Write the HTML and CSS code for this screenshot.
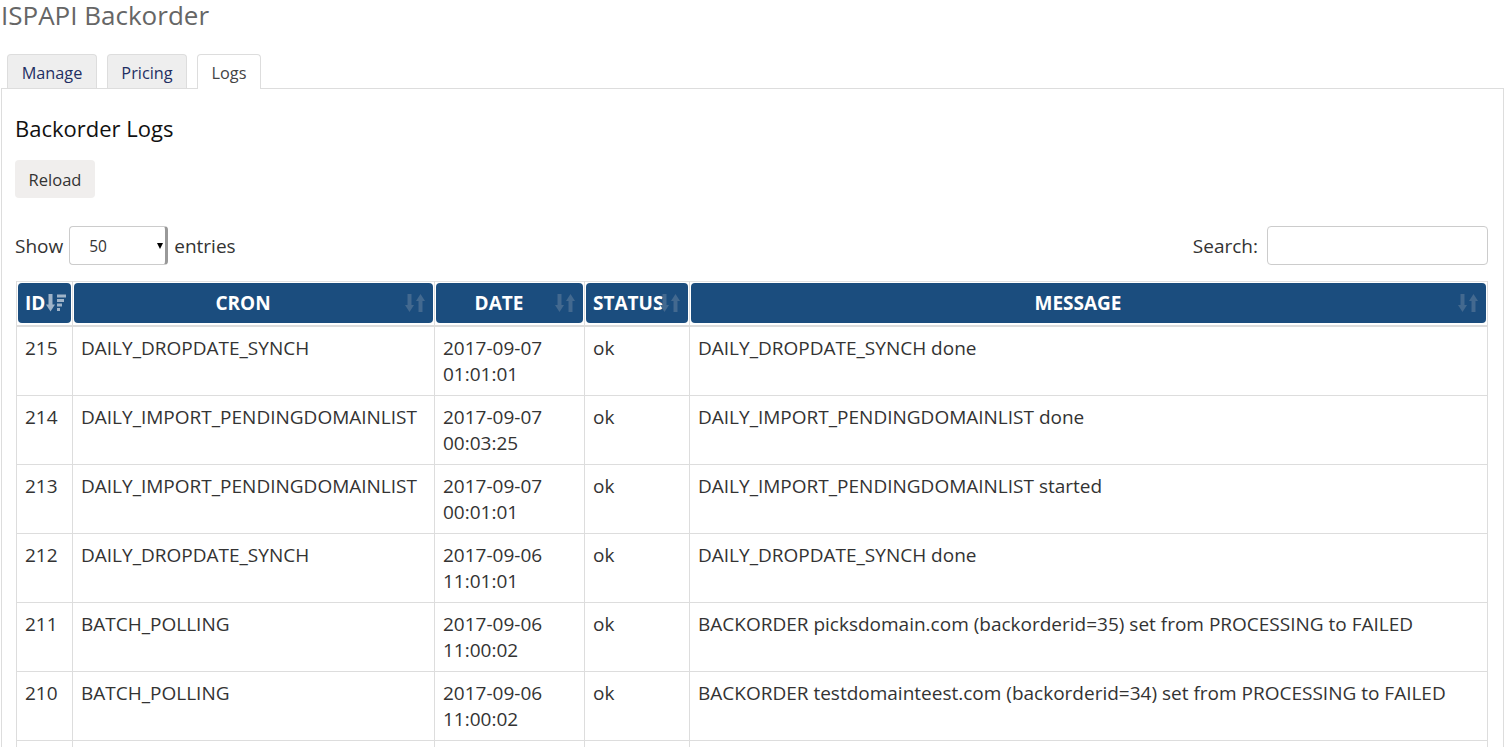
FILE: index.html
```html
<!DOCTYPE html>
<html>
<head>
<meta charset="utf-8">
<link rel="stylesheet" href="styles.css">
</head>
<body>
<div class="page">
  <h1 class="title">ISPAPI Backorder</h1>
  <ul class="tabs">
    <li class="tab tab-manage">Manage</li>
    <li class="tab tab-pricing">Pricing</li>
    <li class="tab tab-logs active">Logs</li>
  </ul>
  <div class="panel">
    <h2 class="heading">Backorder Logs</h2>
    <button class="btn">Reload</button>
    <div class="controls">
      <label class="length">Show
        <span class="select-wrap">
          <select class="select"><option>50</option></select>
          <span class="caret"></span>
        </span>
        entries</label>
      <label class="search">Search: <input class="search-input" type="text"></label>
    </div>
    <table class="grid">
      <colgroup>
        <col style="width:56px"><col style="width:362px"><col style="width:150px"><col style="width:105px"><col>
      </colgroup>
      <thead>
        <tr>
          <th><div class="th th-left">ID<svg class="sort sort-id" viewBox="0 0 20 18" width="20" height="18"><rect x="2.5" y="0" width="4" height="11"/><polygon points="0,10.5 9,10.5 4.5,17.5"/><rect x="11" y="0.5" width="9" height="3"/><rect x="11" y="5" width="7" height="3"/><rect x="11" y="9.5" width="5" height="3"/><rect x="11" y="14" width="3" height="3"/></svg></div></th>
          <th><div class="th">CRON<svg class="sort" viewBox="0 0 20 20" width="20" height="20"><rect x="2.5" y="1" width="4" height="12"/><polygon points="0,12 9,12 4.5,19"/><polygon points="11,8 20,8 15.5,1"/><rect x="13.5" y="7" width="4" height="12"/></svg></div></th>
          <th><div class="th">DATE<svg class="sort" viewBox="0 0 20 20" width="20" height="20"><rect x="2.5" y="1" width="4" height="12"/><polygon points="0,12 9,12 4.5,19"/><polygon points="11,8 20,8 15.5,1"/><rect x="13.5" y="7" width="4" height="12"/></svg></div></th>
          <th><div class="th th-left">STATUS<svg class="sort" viewBox="0 0 20 20" width="20" height="20"><rect x="2.5" y="1" width="4" height="12"/><polygon points="0,12 9,12 4.5,19"/><polygon points="11,8 20,8 15.5,1"/><rect x="13.5" y="7" width="4" height="12"/></svg></div></th>
          <th><div class="th">MESSAGE<svg class="sort" viewBox="0 0 20 20" width="20" height="20"><rect x="2.5" y="1" width="4" height="12"/><polygon points="0,12 9,12 4.5,19"/><polygon points="11,8 20,8 15.5,1"/><rect x="13.5" y="7" width="4" height="12"/></svg></div></th>
        </tr>
      </thead>
      <tbody>
        <tr><td>215</td><td>DAILY_DROPDATE_SYNCH</td><td>2017-09-07<br>01:01:01</td><td>ok</td><td>DAILY_DROPDATE_SYNCH done</td></tr>
        <tr><td>214</td><td>DAILY_IMPORT_PENDINGDOMAINLIST</td><td>2017-09-07<br>00:03:25</td><td>ok</td><td>DAILY_IMPORT_PENDINGDOMAINLIST done</td></tr>
        <tr><td>213</td><td>DAILY_IMPORT_PENDINGDOMAINLIST</td><td>2017-09-07<br>00:01:01</td><td>ok</td><td>DAILY_IMPORT_PENDINGDOMAINLIST started</td></tr>
        <tr><td>212</td><td>DAILY_DROPDATE_SYNCH</td><td>2017-09-06<br>11:01:01</td><td>ok</td><td>DAILY_DROPDATE_SYNCH done</td></tr>
        <tr><td>211</td><td>BATCH_POLLING</td><td>2017-09-06<br>11:00:02</td><td>ok</td><td>BACKORDER picksdomain.com (backorderid=35) set from PROCESSING to FAILED</td></tr>
        <tr><td>210</td><td>BATCH_POLLING</td><td>2017-09-06<br>11:00:02</td><td>ok</td><td>BACKORDER testdomainteest.com (backorderid=34) set from PROCESSING to FAILED</td></tr>
        <tr><td>209</td><td>BATCH_POLLING</td><td>2017-09-06<br>11:00:02</td><td>ok</td><td>BACKORDER testdomain.com (backorderid=33) set from PROCESSING to FAILED</td></tr>
        <tr><td>208</td><td>DAILY_DROPDATE_SYNCH</td><td>2017-09-06<br>01:01:01</td><td>ok</td><td>DAILY_DROPDATE_SYNCH done</td></tr>
      </tbody>
    </table>
  </div>
</div>
</body>
</html>
```

FILE: styles.css
```css
* { box-sizing: border-box; }
html, body { margin: 0; padding: 0; background: #fff; }
body {
  font-family: "Open Sans", "DejaVu Sans", sans-serif;
  color: #333;
  font-size: 19px;
}
.page {
  width: 1504px;
  padding-left: 1px;
}
.title {
  margin: 0;
  font-size: 26px;
  font-weight: normal;
  color: #666;
  line-height: 30px;
  height: 54px;
}
.tabs {
  list-style: none;
  margin: 0;
  padding: 0 0 0 6px;
  display: flex;
  gap: 10px;
  height: 34px;
  position: relative;
  z-index: 1;
}
.tab {
  height: 34px;
  line-height: 36px;
  font-size: 16.3px;
  text-align: center;
  color: #1f2f63;
  background: #eee;
  border: 1px solid #ddd;
  border-bottom: none;
  border-radius: 4px 4px 0 0;
}
.tab-manage { width: 90px; }
.tab-pricing { width: 80px; }
.tab-logs { width: 64px; }
.tab.active {
  background: #fff;
  color: #444;
  height: 35px;
}
.panel {
  border: 1px solid #ddd;
  border-bottom: none;
  padding: 14px 15px 0 13px;
  width: 1503px;
  min-height: 700px;
}
.heading {
  margin: 10px 0 0 0;
  font-size: 22px;
  font-weight: normal;
  color: #111;
  line-height: 30px;
}
.btn {
  margin-top: 17px;
  display: block;
  width: 80px;
  height: 38px;
  border: none;
  border-radius: 4px;
  background: #f0eeed;
  color: #333;
  font-family: "Open Sans", sans-serif;
  font-size: 16.5px;
  padding: 0;
}
.controls {
  margin-top: 28px;
  display: flex;
  justify-content: space-between;
  align-items: center;
  height: 39px;
}
.length, .search {
  display: flex;
  align-items: center;
  gap: 6px;
  font-size: 19px;
  color: #333;
}
.select-wrap {
  position: relative;
  display: inline-block;
  width: 99px;
  height: 39px;
}
.select {
  appearance: none;
  -webkit-appearance: none;
  width: 99px;
  height: 39px;
  border: 1px solid #ccc;
  border-right: 3px solid #999;
  border-radius: 4px;
  background: #fff;
  font-family: "Open Sans", sans-serif;
  font-size: 15.5px;
  color: #333;
  padding: 0 0 0 19px;
}
.caret {
  position: absolute;
  right: 5px;
  top: 17px;
  width: 0;
  height: 0;
  border-left: 3px solid transparent;
  border-right: 3px solid transparent;
  border-top: 6px solid #000;
}
.search { gap: 9px; }
.search-input {
  width: 221px;
  height: 39px;
  border: 1px solid #ccc;
  border-radius: 4px;
}
.grid {
  margin-top: 16px;
  width: 1472px;
  margin-left: 1px;
  border-collapse: collapse;
  table-layout: fixed;
  border-top: 1px solid #e2e2e2;
}
.grid th {
  padding: 1px 1px 2px 1px;
  border-left: 1px solid #ddd;
  border-right: 1px solid #ddd;
  border-bottom: 2px solid #ddd;
}
.th {
  position: relative;
  height: 40px;
  background: #1b4d7e;
  border-radius: 4px;
  color: #fff;
  font-weight: bold;
  font-size: 19px;
  line-height: 40px;
  text-align: center;
  padding: 0 28px 0 7px;
  white-space: nowrap;
}
.th-left { text-align: left; padding-right: 0; }
.sort {
  position: absolute;
  right: 8px;
  top: 10px;
  fill: #43698f;
}
.sort.sort-id {
  fill: #9fb3c8;
  position: static;
  vertical-align: -2px;
  margin-left: 1px;
}
.grid td {
  border: 1px solid #ddd;
  padding: 8px 8px 8px 8px;
  line-height: 26px;
  vertical-align: top;
  color: #333;
  font-size: 19px;
}
```
